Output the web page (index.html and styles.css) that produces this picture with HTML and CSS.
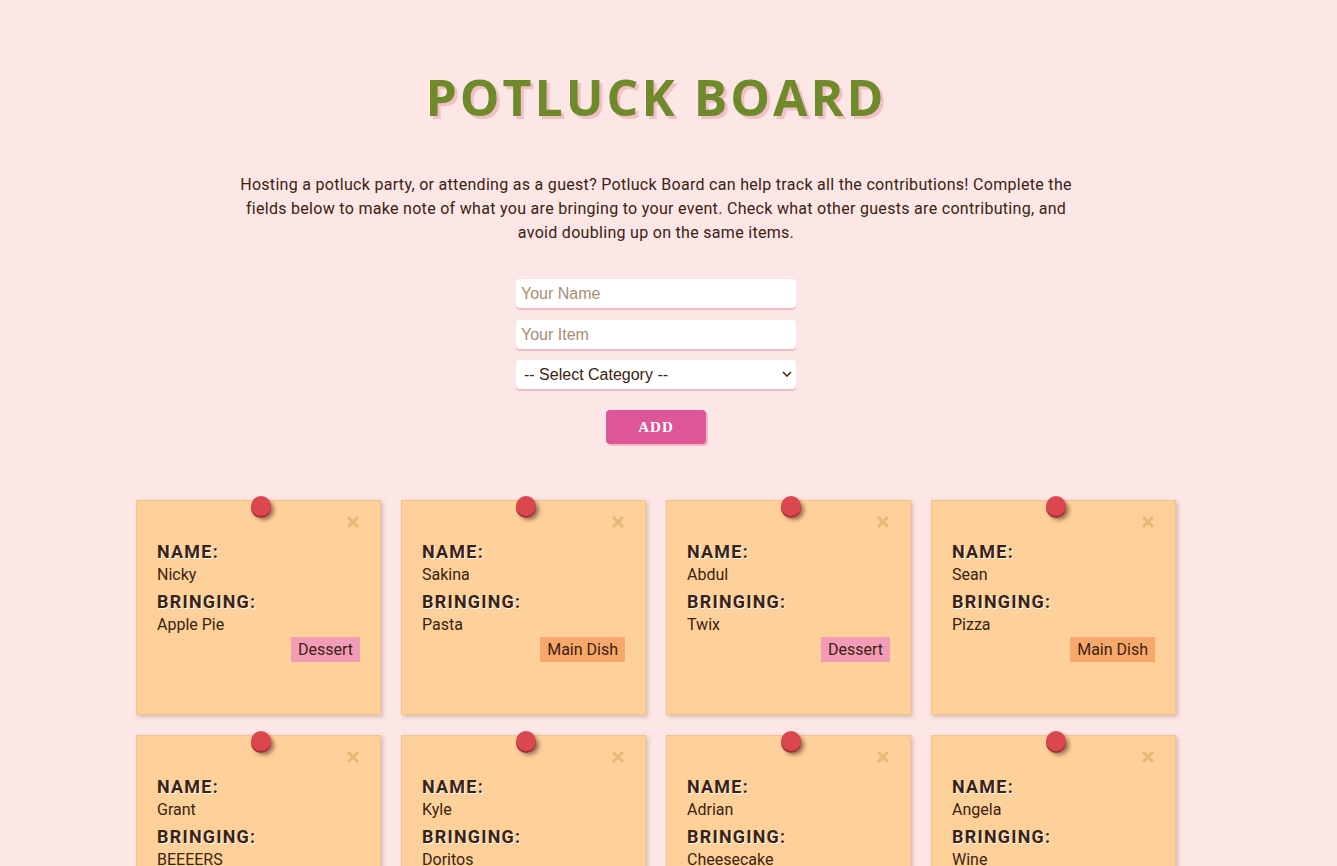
FILE: index.html
```html
<!DOCTYPE html>
<html lang="en">
<head>
<meta charset="utf-8">
<title>Potluck Board</title>
<link rel="stylesheet" href="styles.css">
</head>
<body>
<div class="page">
  <h1 class="title">POTLUCK BOARD</h1>
  <p class="intro">Hosting a potluck party, or attending as a guest? Potluck Board can help track all the contributions! Complete the fields below to make note of what you are bringing to your event. Check what other guests are contributing, and avoid doubling up on the same items.</p>
  <form class="form">
    <input class="field" type="text" placeholder="Your Name">
    <input class="field" type="text" placeholder="Your Item">
    <div class="select-wrap">
      <select class="field select">
        <option>-- Select Category --</option>
        <option>Appetizer</option>
        <option>Main Dish</option>
        <option>Dessert</option>
        <option>Drinks</option>
      </select>
      <svg class="chevron" width="10" height="6" viewBox="0 0 10 6"><path d="M1 1 L5 5 L9 1" fill="none" stroke="#4a2a10" stroke-width="1.6"/></svg>
    </div>
    <button class="add" type="button">ADD</button>
  </form>
  <div class="board">
    <div class="note"><span class="pin"></span><svg class="close" width="14" height="14" viewBox="0 0 14 14"><path d="M2 2 L12 12 M12 2 L2 12" stroke="#e9b776" stroke-width="3" stroke-linecap="butt"/></svg><h3 class="label">NAME:</h3><p class="value">Nicky</p><h3 class="label label-2">BRINGING:</h3><p class="value">Apple Pie</p><div class="tag-row"><span class="tag dessert">Dessert</span></div></div>
    <div class="note"><span class="pin"></span><svg class="close" width="14" height="14" viewBox="0 0 14 14"><path d="M2 2 L12 12 M12 2 L2 12" stroke="#e9b776" stroke-width="3" stroke-linecap="butt"/></svg><h3 class="label">NAME:</h3><p class="value">Sakina</p><h3 class="label label-2">BRINGING:</h3><p class="value">Pasta</p><div class="tag-row"><span class="tag main">Main Dish</span></div></div>
    <div class="note"><span class="pin"></span><svg class="close" width="14" height="14" viewBox="0 0 14 14"><path d="M2 2 L12 12 M12 2 L2 12" stroke="#e9b776" stroke-width="3" stroke-linecap="butt"/></svg><h3 class="label">NAME:</h3><p class="value">Abdul</p><h3 class="label label-2">BRINGING:</h3><p class="value">Twix</p><div class="tag-row"><span class="tag dessert">Dessert</span></div></div>
    <div class="note"><span class="pin"></span><svg class="close" width="14" height="14" viewBox="0 0 14 14"><path d="M2 2 L12 12 M12 2 L2 12" stroke="#e9b776" stroke-width="3" stroke-linecap="butt"/></svg><h3 class="label">NAME:</h3><p class="value">Sean</p><h3 class="label label-2">BRINGING:</h3><p class="value">Pizza</p><div class="tag-row"><span class="tag main">Main Dish</span></div></div>
    <div class="note"><span class="pin"></span><svg class="close" width="14" height="14" viewBox="0 0 14 14"><path d="M2 2 L12 12 M12 2 L2 12" stroke="#e9b776" stroke-width="3" stroke-linecap="butt"/></svg><h3 class="label">NAME:</h3><p class="value">Grant</p><h3 class="label label-2">BRINGING:</h3><p class="value">BEEEERS</p><div class="tag-row"><span class="tag drinks">Drinks</span></div></div>
    <div class="note"><span class="pin"></span><svg class="close" width="14" height="14" viewBox="0 0 14 14"><path d="M2 2 L12 12 M12 2 L2 12" stroke="#e9b776" stroke-width="3" stroke-linecap="butt"/></svg><h3 class="label">NAME:</h3><p class="value">Kyle</p><h3 class="label label-2">BRINGING:</h3><p class="value">Doritos</p><div class="tag-row"><span class="tag appetizer">Appetizer</span></div></div>
    <div class="note"><span class="pin"></span><svg class="close" width="14" height="14" viewBox="0 0 14 14"><path d="M2 2 L12 12 M12 2 L2 12" stroke="#e9b776" stroke-width="3" stroke-linecap="butt"/></svg><h3 class="label">NAME:</h3><p class="value">Adrian</p><h3 class="label label-2">BRINGING:</h3><p class="value">Cheesecake</p><div class="tag-row"><span class="tag dessert">Dessert</span></div></div>
    <div class="note"><span class="pin"></span><svg class="close" width="14" height="14" viewBox="0 0 14 14"><path d="M2 2 L12 12 M12 2 L2 12" stroke="#e9b776" stroke-width="3" stroke-linecap="butt"/></svg><h3 class="label">NAME:</h3><p class="value">Angela</p><h3 class="label label-2">BRINGING:</h3><p class="value">Wine</p><div class="tag-row"><span class="tag drinks">Drinks</span></div></div>
  </div>
</div>
</body>
</html>
```
FILE: styles.css
```css
html, body {
  margin: 0;
  padding: 0;
  background: #fce6e6;
}
body {
  font-family: Roboto, "Liberation Sans", sans-serif;
  color: #3b2210;
}
.page {
  width: 1312px;
  padding-top: 67px;
  display: flex;
  flex-direction: column;
  align-items: center;
}
.title {
  margin: 0;
  font-family: "Open Sans", sans-serif;
  font-weight: 700;
  font-size: 50px;
  line-height: 60px;
  letter-spacing: 3px;
  color: #6f8a2b;
  text-shadow: 3px 3px 0 #f3bfc6;
}
.intro {
  margin: 46px 0 0;
  width: 840px;
  text-align: center;
  font-size: 16px;
  line-height: 24px;
  letter-spacing: 0.3px;
}
.form {
  margin-top: 34px;
  display: flex;
  flex-direction: column;
  align-items: center;
  gap: 12px;
}
.field {
  box-sizing: border-box;
  width: 280px;
  height: 29px;
  margin: 0;
  border: none;
  border-radius: 4px;
  background: #fff;
  box-shadow: 0 2px 0 #efbccb;
  font-family: "Liberation Sans", Arial, sans-serif;
  font-size: 16px;
  color: #3b2210;
  padding: 0 5px;
  outline: none;
}
.field::placeholder {
  color: #a88d72;
}
.select-wrap {
  position: relative;
  width: 280px;
  height: 29px;
  margin-top: -1px;
}
.select {
  -webkit-appearance: none;
  appearance: none;
  padding: 0 8px;
  color: #3b2210;
}
.chevron {
  position: absolute;
  right: 4px;
  top: 11px;
  pointer-events: none;
}
.add {
  margin-top: 9px;
  width: 100px;
  height: 34px;
  border: none;
  border-radius: 4px;
  background: #de5598;
  box-shadow: 2px 2px 0 #f4b7c8;
  color: #fff;
  font-family: "Liberation Serif", "DejaVu Serif", serif;
  font-weight: 700;
  font-size: 15px;
  letter-spacing: 1px;
  cursor: pointer;
}
.board {
  margin-top: 56px;
  display: grid;
  grid-template-columns: repeat(4, 245px);
  gap: 20px;
}
.note {
  position: relative;
  box-sizing: border-box;
  height: 215px;
  padding: 40px 20px 20px 20px;
  background: #ffd19a;
  border: 1px solid #f6c386;
  box-shadow: 2px 2px 4px rgba(150, 110, 80, 0.35);
}
.pin {
  position: absolute;
  top: -5px;
  left: 114px;
  width: 20px;
  height: 20px;
  border-radius: 50%;
  background: #db474e;
  box-shadow: 0 2px 0 #a92f36, 3px 4px 4px rgba(60, 30, 20, 0.55);
}
.close {
  position: absolute;
  top: 14px;
  right: 20px;
}
.label {
  margin: 0;
  font-size: 18px;
  line-height: 22px;
  font-weight: 700;
  letter-spacing: 1.2px;
  color: #3b2210;
  text-shadow: 1px 1px 0 #fff;
}
.label-2 {
  margin-top: 4px;
}
.value {
  margin: 0;
  font-size: 16px;
  line-height: 24px;
}
.tag-row {
  display: flex;
  justify-content: flex-end;
}
.tag {
  font-size: 16px;
  line-height: 25px;
  padding: 0 7px;
}
.dessert { background: #f29cb6; }
.main { background: #f9a86b; }
.drinks { background: #b9d6a0; }
.appetizer { background: #f7e07c; }
```
